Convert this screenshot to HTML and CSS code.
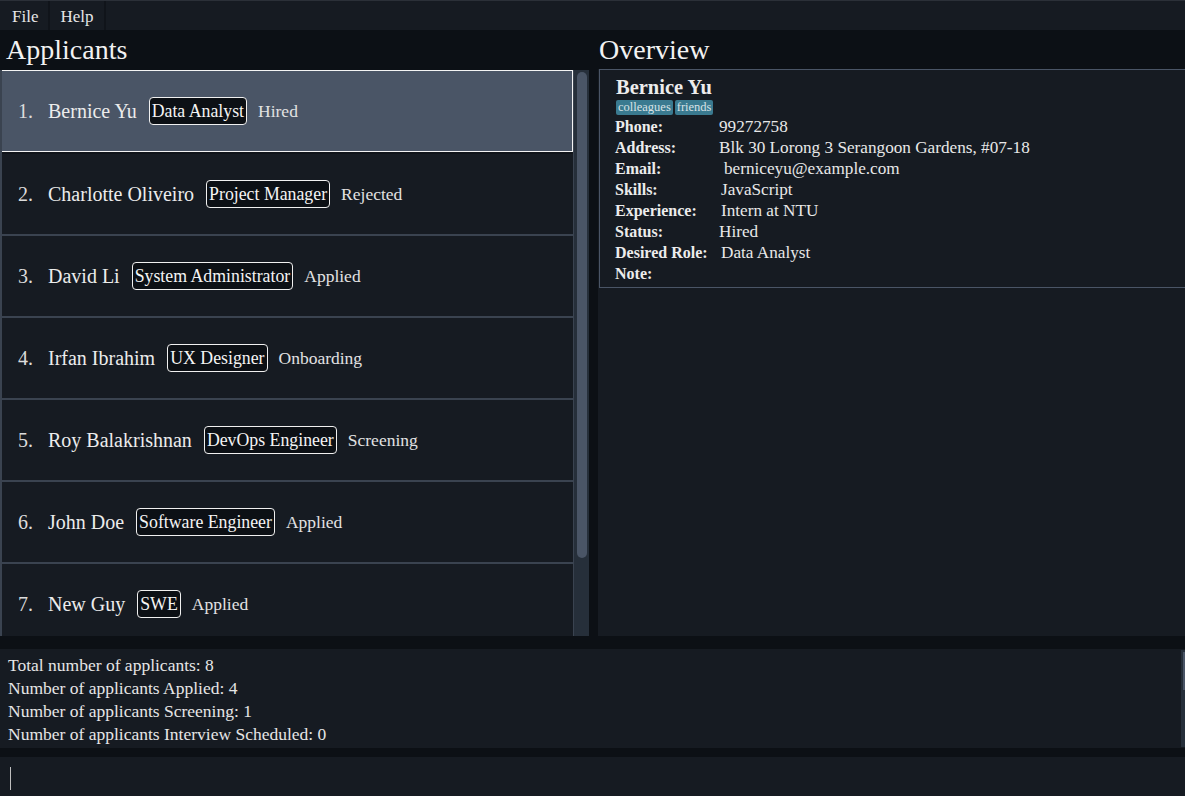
FILE: index.html
```html
<!DOCTYPE html>
<html>
<head>
<meta charset="utf-8">
<link rel="stylesheet" href="styles.css">
</head>
<body>
<div class="menubar">
  <div class="menu-item">File</div>
  <div class="menu-item">Help</div>
</div>
<div class="main">
  <section class="col col-left">
    <h1 class="panel-title">Applicants</h1>
    <div class="listview">
      <div class="cells">
        <div class="row selected"><span class="idx">1.</span><span class="name">Bernice Yu</span><span class="role">Data Analyst</span><span class="status">Hired</span></div>
        <div class="row"><span class="idx">2.</span><span class="name">Charlotte Oliveiro</span><span class="role">Project Manager</span><span class="status">Rejected</span></div>
        <div class="row"><span class="idx">3.</span><span class="name">David Li</span><span class="role">System Administrator</span><span class="status">Applied</span></div>
        <div class="row"><span class="idx">4.</span><span class="name">Irfan Ibrahim</span><span class="role">UX Designer</span><span class="status">Onboarding</span></div>
        <div class="row"><span class="idx">5.</span><span class="name">Roy Balakrishnan</span><span class="role">DevOps Engineer</span><span class="status">Screening</span></div>
        <div class="row"><span class="idx">6.</span><span class="name">John Doe</span><span class="role">Software Engineer</span><span class="status">Applied</span></div>
        <div class="row"><span class="idx">7.</span><span class="name">New Guy</span><span class="role">SWE</span><span class="status">Applied</span></div>
      </div>
      <div class="scrollbar"><div class="thumb"></div></div>
    </div>
  </section>
  <section class="col col-right">
    <h1 class="panel-title">Overview</h1>
    <div class="overview">
      <div class="card">
        <div class="ov-name">Bernice Yu</div>
        <div class="ov-tags"><span class="tag">colleagues</span><span class="tag">friends</span></div>
        <div class="ov-grid">
          <span class="lbl">Phone:</span><span class="val">99272758</span>
          <span class="lbl">Address:</span><span class="val">Blk 30 Lorong 3 Serangoon Gardens, #07-18</span>
          <span class="lbl">Email:</span><span class="val shift4">berniceyu@example.com</span>
          <span class="lbl">Skills:</span><span class="val shift2">JavaScript</span>
          <span class="lbl">Experience:</span><span class="val shift2">Intern at NTU</span>
          <span class="lbl">Status:</span><span class="val">Hired</span>
          <span class="lbl">Desired Role:</span><span class="val shift2">Data Analyst</span>
          <span class="lbl">Note:</span><span class="val"></span>
        </div>
      </div>
    </div>
  </section>
</div>
<div class="results">
  <div class="results-text">
    <div>Total number of applicants: 8</div>
    <div>Number of applicants Applied: 4</div>
    <div>Number of applicants Screening: 1</div>
    <div>Number of applicants Interview Scheduled: 0</div>
  </div>
  <div class="rscroll"><div class="rthumb"></div></div>
</div>
<div class="command"><span class="caret"></span></div>
</body>
</html>
```
FILE: styles.css
```css
* { box-sizing: border-box; }
html, body { margin: 0; padding: 0; }
body {
  width: 1185px;
  height: 796px;
  overflow: hidden;
  background: #0c1015;
  color: #e8e8e8;
  font-family: "Liberation Serif", "DejaVu Serif", serif;
}

.menubar {
  height: 30px;
  display: flex;
  background: #161b22;
  border-top: 1px solid #2b3038;
}
.menu-item {
  font-size: 17px;
  color: #e6e6e6;
  padding: 6px 10px 0 10px;
  border-right: 2px solid #10141a;
}
.menu-item:first-child { padding-left: 12px; }

.main {
  height: 606px;
  display: flex;
  gap: 9px;
}
.col { display: flex; flex-direction: column; }
.col-left { width: 589px; }
.col-right { flex: 1; }

.panel-title {
  margin: 0;
  height: 39px;
  padding: 3px 0 0 6px;
  font-weight: normal;
  font-size: 28px;
  line-height: 34px;
  color: #f2f2f2;
}
.col-left .panel-title { height: 40px; }
.col-right .panel-title { padding-left: 1px; }

.listview {
  flex: 1;
  display: flex;
  overflow: hidden;
}
.cells {
  width: 574px;
  border-left: 2px solid #3a4350;
  border-right: 1px solid #3a4350;
  background: #161b22;
  overflow: hidden;
}
.row {
  height: 82px;
  display: flex;
  align-items: center;
  padding-left: 16px;
  border-top: 2px solid #3a4350;
  font-size: 17.5px;
  color: #e2e2e2;
}
.row.selected {
  background: #4a5566;
  border: 1px solid #f4f4f4;
  height: 82px;
  margin-left: -1px;
  padding-left: 16px;
}
.row.selected + .row { border-top-color: #10141a; }
.idx { width: 30px; font-size: 20px; color: #dcdcdc; }
.name { font-size: 20px; color: #ececec; }
.role {
  margin-left: 12px;
  padding: 0 2px;
  height: 28px;
  line-height: 26px;
  border: 1px solid #f0f0f0;
  border-radius: 4px;
  background: #0c1015;
  color: #f4f4f4;
  font-size: 17.8px;
}
.status { margin-left: 11px; color: #e2e2e2; }

.scrollbar {
  width: 15px;
  background: #262f3a;
  padding: 2px 2px 0 3px;
}
.thumb {
  height: 486px;
  background: #4a5566;
  border-radius: 5px;
}

.overview {
  flex: 1;
  background: #161b22;
}
.card {
  border: 1px solid #4a5566;
  border-right: none;
  margin-left: 1px;
  padding: 5px 0 3px 15px;
}
.ov-name {
  font-weight: bold;
  font-size: 20.5px;
  line-height: 24px;
  color: #ececec;
  padding-left: 1px;
}
.ov-tags { display: flex; gap: 2px; height: 16px; margin-top: 1px; padding-left: 1px; }
.tag {
  background: #3a7a90;
  color: #d8e2e6;
  font-size: 12.5px;
  line-height: 15px;
  height: 15px;
  padding: 0 2px;
  border-radius: 2px;
}
.ov-grid {
  display: grid;
  grid-template-columns: 104px auto;
  grid-auto-rows: 21px;
  line-height: 21px;
}
.lbl { font-weight: bold; font-size: 16px; color: #ececec; }
.val { font-size: 17.2px; color: #e8e8e8; }
.shift2 { padding-left: 2px; }
.shift4 { padding-left: 5px; }

.results {
  margin-top: 13px;
  height: 99px;
  background: #161b22;
  display: flex;
}
.results-text {
  flex: 1;
  padding: 5px 8px;
  font-size: 17.5px;
  line-height: 23px;
  color: #e6e6e6;
}
.rscroll {
  width: 4px;
  margin: 1px 0;
  background: #262f3a;
  padding-left: 2px;
}
.rthumb { height: 38px; margin-top: 2px; background: #4a5566; }

.command {
  margin-top: 9px;
  height: 39px;
  background: #161b22;
  padding: 10px 0 0 10px;
}
.caret {
  display: block;
  width: 1px;
  height: 23px;
  background: #bfbfbf;
}
```
